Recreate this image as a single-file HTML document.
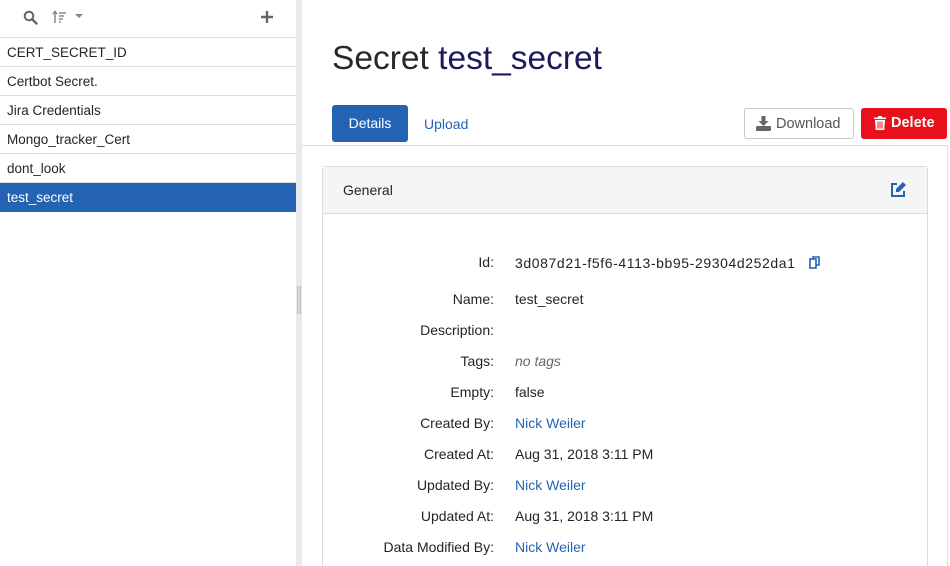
<!DOCTYPE html>
<html><head><style>
*{box-sizing:border-box;margin:0;padding:0}
html,body{width:950px;height:566px;overflow:hidden}
body{background:#fff;font-family:"Liberation Sans",sans-serif;color:#212529;position:relative;font-size:14px}
.side{position:absolute;left:0;top:0;width:296px;height:566px;background:#fff}
.tool{height:38px;border-bottom:1px solid #dcdcdc;position:relative}
.item{height:29px;border-bottom:1px solid #dcdcdc;padding-left:7px;line-height:29px;font-size:13.5px;color:#212529}
.item.sel{background:#2463b4;color:#fff;border-bottom:none}
.div{position:absolute;left:296px;top:0;width:6px;height:566px;background:#e9eaed}
.abs{position:absolute}
.lbl{position:absolute;right:456px;font-size:14px;color:#212529;text-align:right;white-space:nowrap}
.val{position:absolute;left:515px;font-size:14px;white-space:nowrap}
</style></head><body>
<div class="side">
 <div class="tool">
  <svg class="abs" style="left:23px;top:10px" width="15" height="15" viewBox="0 0 15 15"><circle cx="6" cy="6" r="4.3" fill="none" stroke="#666" stroke-width="2"/><path d="M9 9l4.5 4.5" stroke="#666" stroke-width="2.4" stroke-linecap="round"/></svg>
  <svg class="abs" style="left:52px;top:10px" width="16" height="15" viewBox="0 0 16 15"><path d="M3 13V2M1 4l2-2.5L5 4" stroke="#888" stroke-width="1.5" fill="none"/><path d="M7 3h7M7 6h5M7 9h4M7 12h2" stroke="#888" stroke-width="1.6"/></svg>
  <svg class="abs" style="left:75px;top:14px" width="8" height="5"><path d="M0 0h8L4 4z" fill="#888"/></svg>
  <svg class="abs" style="left:260px;top:10px" width="14" height="14"><path d="M7 1v12M1 7h12" stroke="#666" stroke-width="2.4"/></svg>
 </div>
 <div class="item">CERT_SECRET_ID</div>
 <div class="item">Certbot Secret.</div>
 <div class="item">Jira Credentials</div>
 <div class="item">Mongo_tracker_Cert</div>
 <div class="item">dont_look</div>
 <div class="item sel">test_secret</div>
</div>
<div class="div"><svg class="abs" style="left:1px;top:286px" width="4" height="30"><g fill="#aaa"><rect x="0" y="0" width="1.5" height="28" opacity=".6"/><rect x="2.5" y="0" width="1.5" height="28" opacity=".6"/></g></svg></div>
<div class="abs" style="left:332px;top:40px;font-size:33.5px;white-space:nowrap"><span style="color:#24292e">Secret </span><span style="color:#1b1a5c">test_secret</span></div>
<div class="abs" style="left:332px;top:105px;width:76px;height:37px;background:#2463b4;border-radius:3px;color:#fff;font-size:14px;text-align:center;line-height:37px">Details</div>
<div class="abs" style="left:424px;top:106px;line-height:37px;color:#2463b4;font-size:14px">Upload</div>
<div class="abs" style="left:744px;top:108px;width:110px;height:31px;border:1px solid #c8c8c8;border-radius:3px;color:#555;font-size:14.5px;line-height:30px;padding-left:31px">Download</div>
<svg class="abs" style="left:756px;top:116px" width="15" height="15" viewBox="0 0 15 15"><path d="M5.5 0h4v5h3l-5 5-5-5h3z" fill="#666"/><rect x="0" y="10" width="15" height="5" rx="1" fill="#666"/></svg>
<div class="abs" style="left:861px;top:108px;width:86px;height:31px;background:#e8101a;border-radius:3px;color:#fff;font-size:14.5px;font-weight:bold;line-height:31px;padding-left:30px">Delete</div>
<svg class="abs" style="left:874px;top:116px" width="12" height="14" viewBox="0 0 12 14"><path d="M0 1.5h12v1.6H0zM4 0h4v2H4zM1 4h10l-.7 10H1.7z" fill="#fff"/><path d="M4 5.5v7M6 5.5v7M8 5.5v7" stroke="#e8101a" stroke-width="1"/></svg>
<div class="abs" style="left:302px;top:145px;width:646px;height:1px;background:#dcdcdc"></div>
<div class="abs" style="left:947px;top:145px;width:1px;height:421px;background:#dcdcdc"></div>
<div class="abs" style="left:322px;top:166px;width:606px;height:400px;border:1px solid #dcdcdc;border-bottom:none;border-radius:3px 3px 0 0">
 <div style="height:47px;background:#f5f5f5;border-bottom:1px solid #dcdcdc;padding-left:20px;line-height:47px;font-size:14px">General</div>
</div>
<svg class="abs" style="left:890px;top:182px" width="16" height="16" viewBox="0 0 16 16"><path d="M7 2H2v12h12V9" fill="none" stroke="#2463b4" stroke-width="2"/><path d="M13 0l3 3-7 7H6V7z" fill="#2463b4"/></svg>
<div class="lbl" style="top:254px">Id:</div><div class="val" style="top:255px;letter-spacing:0.6px">3d087d21-f5f6-4113-bb95-29304d252da1</div>
<svg class="abs" style="left:809px;top:256px" width="11" height="13" viewBox="0 0 11 13"><rect x="1" y="3" width="6" height="9" fill="none" stroke="#2463b4" stroke-width="1.6"/><path d="M4 3V1h6v8H7" fill="none" stroke="#2463b4" stroke-width="1.6"/></svg>
<div class="lbl" style="top:291px">Name:</div><div class="val" style="top:291px">test_secret</div>
<div class="lbl" style="top:322px">Description:</div>
<div class="lbl" style="top:353px">Tags:</div><div class="val" style="top:353px;font-style:italic;color:#666">no tags</div>
<div class="lbl" style="top:384px">Empty:</div><div class="val" style="top:384px">false</div>
<div class="lbl" style="top:415px">Created By:</div><div class="val" style="top:415px;color:#2463b4">Nick Weiler</div>
<div class="lbl" style="top:446px">Created At:</div><div class="val" style="top:446px">Aug 31, 2018 3:11 PM</div>
<div class="lbl" style="top:477px">Updated By:</div><div class="val" style="top:477px;color:#2463b4">Nick Weiler</div>
<div class="lbl" style="top:508px">Updated At:</div><div class="val" style="top:508px">Aug 31, 2018 3:11 PM</div>
<div class="lbl" style="top:539px">Data Modified By:</div><div class="val" style="top:539px;color:#2463b4">Nick Weiler</div>
</body></html>
